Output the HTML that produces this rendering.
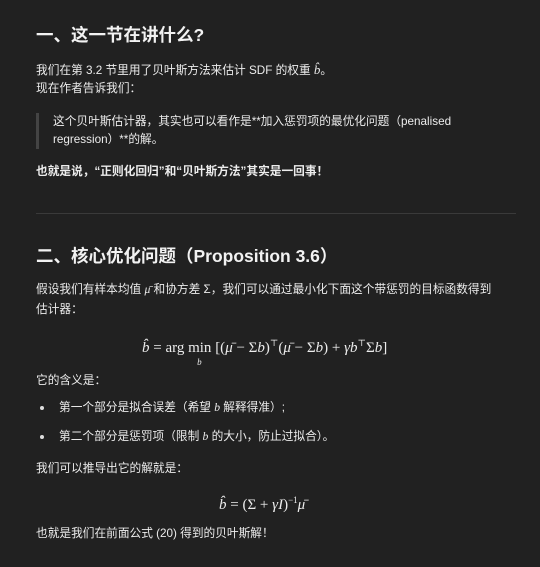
<!DOCTYPE html>
<html><head><meta charset="utf-8"><style>
body{margin:0;width:540px;height:567px;background:#212121;color:#ececec;font-family:"Liberation Sans","Noto Sans CJK SC",sans-serif;font-size:11.7px;overflow:hidden;position:relative}
.a{position:absolute;left:36px;white-space:nowrap;line-height:18px}
h1{position:absolute;left:36px;margin:0;font-size:17.5px;font-weight:bold;color:#f2f2f2;line-height:24px;white-space:nowrap}
.m{font-family:"Liberation Serif","DejaVu Serif",serif;font-style:italic}
.f{position:absolute;font-family:"Liberation Serif","DejaVu Serif",serif;font-size:15px;white-space:nowrap;line-height:20px}
</style></head><body>
<h1 style="top:23px">一、这一节在讲什么?</h1>
<div class="a" style="top:61px">我们在第 3.2 节里用了贝叶斯方法来估计 SDF 的权重 <span class="m" style="font-size:13px">b̂</span>。</div>
<div class="a" style="top:80px">现在作者告诉我们：</div>
<div style="position:absolute;left:36px;top:113px;width:3px;height:36px;background:#444"></div>
<div class="a" style="left:53px;top:113px">这个贝叶斯估计器，其实也可以看作是**加入惩罚项的最优化问题（penalised</div>
<div class="a" style="left:53px;top:131px">regression）**的解。</div>
<div class="a" style="top:163px;font-weight:bold">也就是说，“正则化回归”和“贝叶斯方法”其实是一回事！</div>
<div style="position:absolute;left:36px;top:213px;width:480px;height:1px;background:#3a3a3a"></div>
<h1 style="top:244px">二、核心优化问题（Proposition 3.6）</h1>
<div class="a" style="top:281px">假设我们有样本均值 <span class="m">μ̄</span> 和协方差 Σ，我们可以通过最小化下面这个带惩罚的目标函数得到</div>
<div class="a" style="top:301px">估计器：</div>
<div class="f" style="left:142px;top:333px"><i>b̂</i> = arg <span style="position:relative">min<span style="position:absolute;left:9px;top:12px;font-size:9px;font-style:italic">b</span></span> [(<i>μ̄</i> − Σ<i>b</i>)<sup style="font-size:9px">⊤</sup>(<i>μ̄</i> − Σ<i>b</i>) + <i>γb</i><sup style="font-size:9px">⊤</sup>Σ<i>b</i>]</div>
<div class="a" style="top:372px">它的含义是：</div>
<div style="position:absolute;left:40px;top:406px;width:4px;height:4px;border-radius:50%;background:#ddd"></div>
<div class="a" style="left:59px;top:399px">第一个部分是拟合误差（希望 <span class="m">b</span> 解释得准）;</div>
<div style="position:absolute;left:40px;top:435px;width:4px;height:4px;border-radius:50%;background:#ddd"></div>
<div class="a" style="left:59px;top:428px">第二个部分是惩罚项（限制 <span class="m">b</span> 的大小，防止过拟合）。</div>
<div class="a" style="top:460px">我们可以推导出它的解就是：</div>
<div class="f" style="left:219px;top:490px"><i>b̂</i> = (Σ + <i>γI</i>)<sup style="font-size:9px">−1</sup><i>μ̄</i></div>
<div class="a" style="top:525px">也就是我们在前面公式 (20) 得到的贝叶斯解！</div>
</body></html>
